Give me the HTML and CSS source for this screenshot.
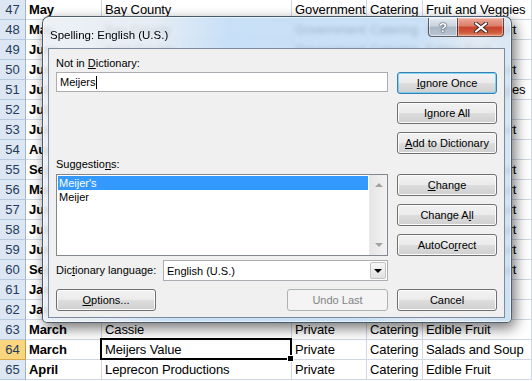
FILE: index.html
```html
<!DOCTYPE html>
<html lang="en">
<head>
    <meta charset="UTF-8">
    <title>Spelling: English (U.S.)</title>
    <link rel="stylesheet" href="styles.css">
</head>
<body>
    <div class="sheet">
        <div class="row"><div class="rh">47</div><div class="c b">May</div><div class="c">Bay County</div><div class="c">Government</div><div class="c">Catering</div><div class="c">Fruit and Veggies</div></div>
        <div class="row"><div class="rh">48</div><div class="c b">May</div><div class="c">Bay County</div><div class="c">Government</div><div class="c">Catering</div><div class="c">Fruit and Yogurt</div></div>
        <div class="row"><div class="rh">49</div><div class="c b">June</div><div class="c">Kent County</div><div class="c">Government</div><div class="c">Catering</div><div class="c">Edible Fruit</div></div>
        <div class="row"><div class="rh">50</div><div class="c b">June</div><div class="c">Allegan Farms</div><div class="c">Private</div><div class="c">Catering</div><div class="c">Fruit and Yogurt</div></div>
        <div class="row"><div class="rh">51</div><div class="c b">July</div><div class="c">Harbor Grill</div><div class="c">Private</div><div class="c">Catering</div><div class="c">Fruit and Veggies</div></div>
        <div class="row"><div class="rh">52</div><div class="c b">July</div><div class="c">Cassie</div><div class="c">Private</div><div class="c">Catering</div><div class="c">Edible Fruit</div></div>
        <div class="row"><div class="rh">53</div><div class="c b">July</div><div class="c">Ottawa County</div><div class="c">Government</div><div class="c">Catering</div><div class="c">Fruit and Yogurt</div></div>
        <div class="row"><div class="rh">54</div><div class="c b">August</div><div class="c">Cassie</div><div class="c">Private</div><div class="c">Catering</div><div class="c">Edible Fruit</div></div>
        <div class="row"><div class="rh">55</div><div class="c b">September</div><div class="c">Bay County</div><div class="c">Government</div><div class="c">Catering</div><div class="c">Fruit and Yogurt</div></div>
        <div class="row"><div class="rh">56</div><div class="c b">March</div><div class="c">Lakeshore Bakery</div><div class="c">Private</div><div class="c">Catering</div><div class="c">Fruit and Yogurt</div></div>
        <div class="row"><div class="rh">57</div><div class="c b">June</div><div class="c">Kent County</div><div class="c">Government</div><div class="c">Catering</div><div class="c">Fruit and Yogurt</div></div>
        <div class="row"><div class="rh">58</div><div class="c b">July</div><div class="c">Harbor Grill</div><div class="c">Private</div><div class="c">Catering</div><div class="c">Fruit and Yogurt</div></div>
        <div class="row"><div class="rh">59</div><div class="c b">June</div><div class="c">Ottawa County</div><div class="c">Government</div><div class="c">Catering</div><div class="c">Fruit and Yogurt</div></div>
        <div class="row"><div class="rh">60</div><div class="c b">September</div><div class="c">Bay County</div><div class="c">Government</div><div class="c">Catering</div><div class="c">Fruit and Yogurt</div></div>
        <div class="row"><div class="rh">61</div><div class="c b">January</div><div class="c">Cassie</div><div class="c">Private</div><div class="c">Catering</div><div class="c">Edible Fruit</div></div>
        <div class="row"><div class="rh">62</div><div class="c b">January</div><div class="c">Cassie</div><div class="c">Private</div><div class="c">Catering</div><div class="c">Edible Fruit</div></div>
        <div class="row"><div class="rh">63</div><div class="c b">March</div><div class="c">Cassie</div><div class="c">Private</div><div class="c">Catering</div><div class="c">Edible Fruit</div></div>
        <div class="row"><div class="rh current">64</div><div class="c b">March</div><div class="c active">Meijers Value</div><div class="c">Private</div><div class="c">Catering</div><div class="c">Salads and Soup</div></div>
        <div class="row"><div class="rh">65</div><div class="c b">April</div><div class="c">Leprecon Productions</div><div class="c">Private</div><div class="c">Catering</div><div class="c">Edible Fruit</div></div>
    </div>

    <div class="dialog">
        <div class="titlebar">
            <span class="title">Spelling: English (U.S.)</span>
            <div class="caption-btns">
                <span class="cap cap-help">?</span>
                <span class="cap cap-close">
                    <svg width="14" height="11" viewBox="0 0 14 11">
                        <path d="M2 1.5 L12 9.5 M12 1.5 L2 9.5" stroke="#3a2a2a" stroke-width="4" stroke-linecap="round"/>
                        <path d="M2 1.5 L12 9.5 M12 1.5 L2 9.5" stroke="#fff" stroke-width="2.2" stroke-linecap="round"/>
                    </svg>
                </span>
            </div>
        </div>

        <div class="client">
            <label class="lbl lbl-nid">Not in <u>D</u>ictionary:</label>
            <div class="textbox">Meijers<span class="caret"></span></div>
            <div class="btn-stack btns-top">
                <button class="btn default"><u>I</u>gnore Once</button>
                <button class="btn">I<u>g</u>nore All</button>
                <button class="btn"><u>A</u>dd to Dictionary</button>
            </div>

            <label class="lbl lbl-sug">Suggestio<u>n</u>s:</label>
            <div class="listbox">
                <ul class="items">
                    <li class="sel">Meijer's</li>
                    <li>Meijer</li>
                </ul>
                <div class="vscroll">
                    <span class="arr up"></span>
                    <span class="arr down"></span>
                </div>
            </div>
            <div class="btn-stack btns-mid">
                <button class="btn"><u>C</u>hange</button>
                <button class="btn">Change A<u>l</u>l</button>
                <button class="btn">AutoCo<u>r</u>rect</button>
            </div>

            <div class="lang-row">
                <label class="lbl">Dic<u>t</u>ionary language:</label>
                <div class="combo">
                    <span class="combo-text">English (U.S.)</span>
                    <span class="drop"></span>
                </div>
            </div>

            <div class="bottom-left">
                <button class="btn options"><u>O</u>ptions...</button>
                <button class="btn undo" disabled>Undo Last</button>
            </div>
            <button class="btn cancel">Cancel</button>
        </div>
    </div>
</body>
</html>
```

FILE: styles.css
```css
body {
    margin: 0;
    width: 532px;
    height: 381px;
    overflow: hidden;
    position: relative;
    background: #fff;
    font-family: 'Liberation Sans', Arial, sans-serif;
}

/* spreadsheet behind the dialog */
.sheet {
    width: 532px;
    overflow: hidden;
}

.row {
    display: grid;
    grid-template-columns: 26px 76px 190px 75px 56px 1fr;
    height: 20px;
}

.rh, .c {
    box-sizing: border-box;
    height: 20px;
    line-height: 19px;
    font-size: 13px;
    white-space: nowrap;
    overflow: hidden;
}

.rh {
    background: #dde7f4;
    border-right: 1px solid #9eb6ce;
    border-bottom: 1px solid #b7c9de;
    color: #243b5a;
    text-align: center;
}

.rh.current {
    background: #f9d57d;
    border-bottom-color: #d8a94a;
    border-right-color: #c9993f;
}

.c {
    border-right: 1px solid #d0d7e5;
    border-bottom: 1px solid #d0d7e5;
    padding-left: 3px;
    letter-spacing: -0.1px;
    color: #000;
}

.c.b {
    font-weight: bold;
}

.c.active {
    position: relative;
    overflow: visible;
}

.c.active::after {
    content: '';
    position: absolute;
    left: -2px;
    top: -2px;
    right: -1px;
    bottom: -1px;
    border: 2px solid #000;
}

.c.active::before {
    content: '';
    position: absolute;
    right: -3px;
    bottom: -3px;
    width: 5px;
    height: 5px;
    background: #000;
    border: 1px solid #fff;
    z-index: 1;
}

/* spelling dialog */
.dialog {
    position: absolute;
    left: 42px;
    top: 16px;
    width: 470px;
    height: 307px;
    box-sizing: border-box;
    padding: 0 6px 4px 5px;
    border: 1px solid rgba(30, 45, 65, 0.75);
    border-radius: 7px 7px 5px 5px;
    background: linear-gradient(100deg, rgba(236, 240, 245, 0.9) 0%, rgba(226, 234, 243, 0.88) 22%, rgba(188, 217, 245, 0.82) 36%, rgba(192, 219, 245, 0.82) 72%, rgba(222, 232, 242, 0.88) 84%, rgba(196, 220, 243, 0.85) 100%);
    backdrop-filter: blur(2px);
    box-shadow: inset 0 0 0 1px rgba(255, 255, 255, 0.55), 3px 5px 14px rgba(0, 0, 0, 0.55);
    display: flex;
    flex-direction: column;
}

.titlebar {
    height: 31px;
    display: flex;
    justify-content: space-between;
    align-items: flex-start;
}

.title {
    margin: 11px 0 0 2px;
    font-size: 11.5px;
    line-height: 14px;
    color: #000;
}

.caption-btns {
    display: flex;
    margin-top: 1px;
    margin-right: 1px;
}

.cap {
    box-sizing: border-box;
    height: 19px;
    border: 1px solid rgba(40, 40, 50, 0.7);
    border-top: none;
    display: flex;
    align-items: center;
    justify-content: center;
}

.cap-help {
    width: 29px;
    border-right: none;
    border-radius: 0 0 0 4px;
    background: linear-gradient(#e3e9f0 0%, #c9d3de 45%, #a9b7c6 50%, #b8c6d4 100%);
    box-shadow: inset 0 0 0 1px rgba(255, 255, 255, 0.5);
    color: #fff;
    font-weight: bold;
    font-size: 13px;
    text-shadow: 0 0 2px #334, 0 0 1px #223;
}

.cap-close {
    width: 47px;
    border-radius: 0 0 4px 0;
    background: linear-gradient(#e9a998 0%, #dc7e69 45%, #c7432c 50%, #cf5a3c 80%, #e08e6a 100%);
    box-shadow: inset 0 0 0 1px rgba(255, 220, 210, 0.5);
}

.client {
    height: 270px;
    box-sizing: border-box;
    border: 1px solid #7b8a9c;
    background: #f0f0f0;
    padding: 8px 7px 6px 7px;
    display: grid;
    grid-template-columns: 332px 100px;
    grid-template-rows: 15px 82px 20px 82px auto auto;
    column-gap: 9px;
    font-size: 11px;
    color: #000;
}

.lbl {
    font-size: 11px;
    line-height: 13px;
}

.lbl-nid {
    grid-column: 1;
    grid-row: 1;
}

.textbox {
    grid-column: 1;
    grid-row: 2;
    align-self: start;
    box-sizing: border-box;
    height: 20px;
    border: 1px solid #abadb3;
    background: #fff;
    padding: 0 3px;
    line-height: 18px;
}

.caret {
    display: inline-block;
    width: 1px;
    height: 13px;
    background: #000;
    vertical-align: -3px;
    margin-left: 1px;
}

.btn-stack {
    grid-column: 2;
    display: flex;
    flex-direction: column;
    gap: 8px;
}

.btns-top {
    grid-row: 2;
}

.btns-mid {
    grid-row: 4;
}

.btn {
    box-sizing: border-box;
    height: 22px;
    width: 100px;
    padding: 0;
    border: 1px solid #707070;
    border-radius: 3px;
    background: linear-gradient(#f2f2f2 0%, #ebebeb 48%, #dddddd 52%, #cfcfcf 100%);
    box-shadow: inset 0 0 0 1px #fcfcfc;
    font-family: 'Liberation Sans', Arial, sans-serif;
    font-size: 11px;
    color: #000;
}

.btn.default {
    border-color: #3c7fb1;
    box-shadow: inset 0 0 0 1px rgba(90, 205, 250, 0.75);
}

.btn:disabled {
    border-color: #adb2b5;
    background: #f4f4f4;
    box-shadow: none;
    color: #838383;
}

.lbl-sug {
    grid-column: 1;
    grid-row: 3;
    align-self: end;
    margin-bottom: 3px;
}

.listbox {
    grid-column: 1;
    grid-row: 4;
    box-sizing: border-box;
    border: 1px solid #828790;
    background: #fff;
    display: flex;
}

.items {
    flex: 1;
    list-style: none;
    margin: 0;
    padding: 1px;
}

.items li {
    height: 14px;
    line-height: 14px;
    padding-left: 1px;
}

.items li.sel {
    background: #3399ff;
    color: #fff;
}

.vscroll {
    width: 17px;
    background: linear-gradient(to right, #e6e6e6, #f2f2f2);
    border-left: 1px solid #eaeaea;
    display: flex;
    flex-direction: column;
    justify-content: space-between;
    align-items: center;
    padding: 8px 0;
}

.arr {
    width: 0;
    height: 0;
    border-left: 4px solid transparent;
    border-right: 4px solid transparent;
}

.arr.up {
    border-bottom: 4px solid #a3a3a3;
}

.arr.down {
    border-top: 4px solid #a3a3a3;
}

.lang-row {
    grid-column: 1;
    grid-row: 5;
    margin-top: 4px;
    height: 21px;
    display: flex;
    align-items: center;
    justify-content: space-between;
}

.combo {
    box-sizing: border-box;
    width: 225px;
    height: 21px;
    border: 1px solid #abadb3;
    background: #fff;
    display: flex;
    align-items: center;
    justify-content: space-between;
    padding: 1px;
}

.combo-text {
    padding-left: 2px;
}

.drop {
    box-sizing: border-box;
    width: 16px;
    height: 17px;
    border: 1px solid #c3c3c3;
    border-radius: 2px;
    background: linear-gradient(#f6f6f6, #e2e2e2);
    display: flex;
    align-items: center;
    justify-content: center;
}

.drop::after {
    content: '';
    border-left: 4px solid transparent;
    border-right: 4px solid transparent;
    border-top: 4px solid #000;
}

.bottom-left {
    grid-column: 1;
    grid-row: 6;
    margin-top: 8px;
    display: flex;
    justify-content: space-between;
}

.btn.undo {
    width: 101px;
}

.cancel {
    grid-column: 2;
    grid-row: 6;
    margin-top: 8px;
}
```
